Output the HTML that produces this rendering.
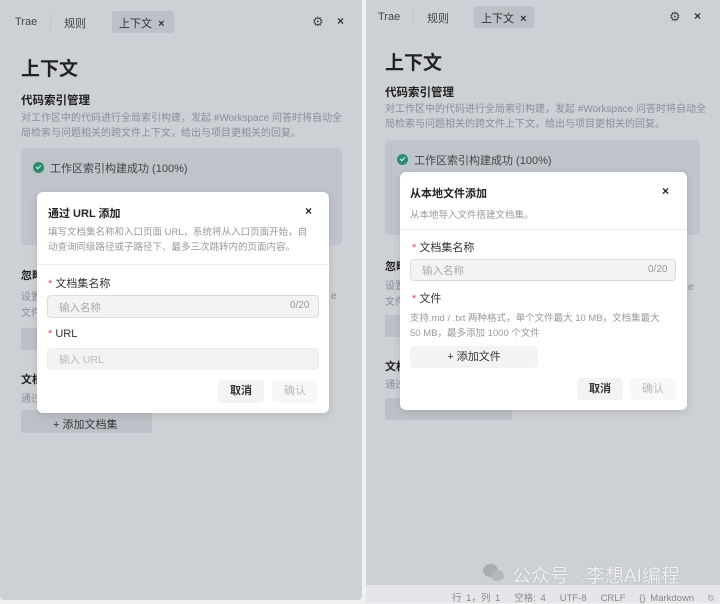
<!DOCTYPE html>
<html><head><meta charset="utf-8"><style>
*{box-sizing:border-box;margin:0;padding:0}
body{width:720px;height:603px;background:#eef0f2;font-family:"Liberation Sans","Noto Sans CJK SC",sans-serif;position:relative;overflow:hidden;color:#222}
.a{position:absolute;white-space:nowrap}
.panel{position:absolute;background:#cdd0d4}
.g{color:#8a8f96}
.b{font-weight:bold}
.dlg{position:absolute;background:#fff;border-radius:6px;box-shadow:0 2px 8px rgba(0,0,0,.12)}
.inp{position:absolute;background:#f2f3f5;border:1px solid #d9dce0;border-radius:4px}
.btn{position:absolute;border-radius:4px;text-align:center;font-size:11px}
.chk{position:absolute;width:11px;height:11px;border-radius:50%;background:#2e8b6f}
.chk:after{content:"";position:absolute;left:3px;top:2.5px;width:4px;height:2px;border-left:1.5px solid #cfe;border-bottom:1.5px solid #cfe;transform:rotate(-45deg)}
.red{color:#e0455a}
</style></head><body>
<!-- LEFT -->
<div class="panel" style="left:0;top:0;width:362px;height:600px;border-radius:0 0 4px 4px"></div>
<div class="a" style="left:15px;top:16px;font-size:11px;color:#444">Trae</div>
<div class="a" style="left:50px;top:14px;width:1px;height:16px;background:#bfc3c8"></div>
<div class="a" style="left:64px;top:15px;font-size:11px;color:#444">规则</div>
<div class="a" style="left:112px;top:11px;width:62px;height:22px;background:#bcc1c7;border-radius:3px"></div>
<div class="a" style="left:119px;top:15px;font-size:11px;color:#333">上下文 <b style="margin-left:3px">×</b></div>
<div class="a" style="left:312px;top:14px;font-size:13px;color:#444">⚙</div>
<div class="a" style="left:337px;top:14px;font-size:12px;font-weight:bold;color:#333">×</div>
<div class="a b" style="left:21px;top:54px;font-size:19px">上下文</div>
<div class="a b" style="left:21px;top:92px;font-size:11.5px">代码索引管理</div>
<div class="a g" style="left:21px;top:111px;font-size:10px;line-height:15px">对工作区中的代码进行全局索引构建，发起 #Workspace 问答时将自动全<br>局检索与问题相关的跨文件上下文，给出与项目更相关的回复。</div>
<div class="a" style="left:21px;top:148px;width:321px;height:97px;background:#bfc4ca;border-radius:5px"></div>
<div class="chk" style="left:33px;top:162px"></div>
<div class="a" style="left:50px;top:160px;font-size:11px;color:#444">工作区索引构建成功 (100%)</div>
<div class="a b" style="left:21px;top:267px;font-size:11px">忽略</div>
<div class="a g" style="left:21px;top:290px;font-size:10px;line-height:16px">设置<br>文件</div>
<div class="a" style="left:21px;top:328px;width:40px;height:22px;background:#bcc1c7"></div>
<div class="a b" style="left:21px;top:371px;font-size:11px">文档</div>
<div class="a g" style="left:21px;top:390px;font-size:10px">通过</div>
<div class="a" style="left:21px;top:410px;width:131px;height:23px;background:#bcc1c7;border-radius:3px"></div>
<div class="a" style="left:53px;top:416px;font-size:11px;color:#333">+ 添加文档集</div>
<div class="a g" style="left:331px;top:291px;font-size:10px">e</div>

<div class="dlg" style="left:37px;top:192px;width:292px;height:221px"></div>
<div class="a b" style="left:48px;top:205px;font-size:11px;font-weight:600">通过 URL 添加</div>
<div class="a b" style="left:305px;top:204px;font-size:12px">×</div>
<div class="a g" style="left:48px;top:225px;font-size:9.5px;line-height:15px;color:#999">填写文档集名称和入口页面 URL，系统将从入口页面开始，自<br>动查询同级路径或子路径下、最多三次跳转内的页面内容。</div>
<div class="a" style="left:37px;top:264px;width:292px;height:1px;background:#eceef0"></div>
<div class="a" style="left:48px;top:275px;font-size:11px;color:#333"><span class="red">*</span> 文档集名称</div>
<div class="inp" style="left:47px;top:295px;width:272px;height:23px"></div>
<div class="a" style="left:59px;top:300px;font-size:10.5px;color:#aaa">输入名称</div>
<div class="a" style="left:290px;top:300px;font-size:10px;color:#999">0/20</div>
<div class="a" style="left:48px;top:328px;font-size:11px;color:#333"><span class="red">*</span> URL</div>
<div class="inp" style="left:47px;top:348px;width:272px;height:22px;border-color:#eceef0"></div>
<div class="a" style="left:59px;top:352px;font-size:10.5px;color:#bbb">输入 URL</div>
<div class="btn" style="left:218px;top:380px;width:46px;height:23px;background:#f2f3f5;line-height:23px;font-weight:bold;color:#333">取消</div>
<div class="btn" style="left:272px;top:380px;width:46px;height:23px;background:#f7f8f9;line-height:23px;color:#bbb">确认</div>

<!-- RIGHT -->
<div class="panel" style="left:366px;top:0;width:354px;height:603px"></div>
<div class="a" style="left:378px;top:11px;font-size:11px;color:#444">Trae</div>
<div class="a" style="left:413px;top:8px;width:1px;height:16px;background:#bfc3c8"></div>
<div class="a" style="left:427px;top:10px;font-size:11px;color:#444">规则</div>
<div class="a" style="left:474px;top:6px;width:60px;height:22px;background:#bcc1c7;border-radius:3px"></div>
<div class="a" style="left:481px;top:10px;font-size:11px;color:#333">上下文 <b style="margin-left:3px">×</b></div>
<div class="a" style="left:669px;top:9px;font-size:13px;color:#444">⚙</div>
<div class="a" style="left:694px;top:9px;font-size:12px;font-weight:bold;color:#333">×</div>
<div class="a b" style="left:385px;top:48px;font-size:19px">上下文</div>
<div class="a b" style="left:385px;top:84px;font-size:11.5px">代码索引管理</div>
<div class="a g" style="left:385px;top:102px;font-size:10px;line-height:15px">对工作区中的代码进行全局索引构建，发起 #Workspace 问答时将自动全<br>局检索与问题相关的跨文件上下文，给出与项目更相关的回复。</div>
<div class="a" style="left:385px;top:140px;width:315px;height:95px;background:#bfc4ca;border-radius:5px"></div>
<div class="chk" style="left:397px;top:154px"></div>
<div class="a" style="left:414px;top:152px;font-size:11px;color:#444">工作区索引构建成功 (100%)</div>
<div class="a b" style="left:385px;top:258px;font-size:11px">忽略</div>
<div class="a g" style="left:385px;top:279px;font-size:10px;line-height:16px">设置<br>文件</div>
<div class="a" style="left:385px;top:315px;width:40px;height:22px;background:#bcc1c7"></div>
<div class="a b" style="left:385px;top:358px;font-size:11px">文档</div>
<div class="a g" style="left:385px;top:376px;font-size:10px">通过</div>
<div class="a" style="left:385px;top:398px;width:127px;height:22px;background:#bcc1c7;border-radius:3px"></div>
<div class="a g" style="left:688px;top:282px;font-size:10px">e</div>

<div class="dlg" style="left:400px;top:172px;width:287px;height:238px"></div>
<div class="a" style="left:410px;top:185px;font-size:11px;font-weight:600">从本地文件添加</div>
<div class="a b" style="left:662px;top:184px;font-size:12px">×</div>
<div class="a" style="left:410px;top:207px;font-size:9.5px;color:#999">从本地导入文件搭建文档集。</div>
<div class="a" style="left:400px;top:229px;width:287px;height:1px;background:#eceef0"></div>
<div class="a" style="left:412px;top:239px;font-size:11px;color:#333"><span class="red">*</span> 文档集名称</div>
<div class="inp" style="left:410px;top:259px;width:266px;height:22px"></div>
<div class="a" style="left:422px;top:263px;font-size:10.5px;color:#aaa">输入名称</div>
<div class="a" style="left:648px;top:264px;font-size:10px;color:#999">0/20</div>
<div class="a" style="left:412px;top:290px;font-size:11px;color:#333"><span class="red">*</span> 文件</div>
<div class="a g" style="left:410px;top:311px;font-size:9.5px;line-height:15px;color:#999">支持.md / .txt 两种格式，单个文件最大 10 MB，文档集最大<br>50 MB，最多添加 1000 个文件</div>
<div class="btn" style="left:410px;top:346px;width:128px;height:22px;background:#f2f3f5;line-height:22px;color:#333">+ 添加文件</div>
<div class="btn" style="left:577px;top:378px;width:46px;height:22px;background:#f2f3f5;line-height:22px;font-weight:bold;color:#333">取消</div>
<div class="btn" style="left:630px;top:378px;width:46px;height:22px;background:#f7f8f9;line-height:22px;color:#bbb">确认</div>

<div class="a" style="left:366px;top:585px;width:354px;height:18px;background:#e4e6e9"></div>
<div class="a" style="left:452px;top:590px;font-size:9.5px;color:#888;word-spacing:2px">行 1，列 1 &nbsp; 空格: 4 &nbsp; UTF-8 &nbsp; CRLF &nbsp; {} Markdown &nbsp; ⍉</div>
<div class="a" style="left:483px;top:564px;width:22px;height:18px">
<div style="position:absolute;left:0;top:0;width:15px;height:13px;border-radius:50%;background:#a9adb2"></div>
<div style="position:absolute;left:8px;top:6px;width:13px;height:11px;border-radius:50%;background:#b4b8bd"></div></div>
<div class="a" style="left:512px;top:561px;font-size:19px;color:#eef0f2;text-shadow:0 0 1px #999">公众号 · 李想AI编程</div>
</body></html>
